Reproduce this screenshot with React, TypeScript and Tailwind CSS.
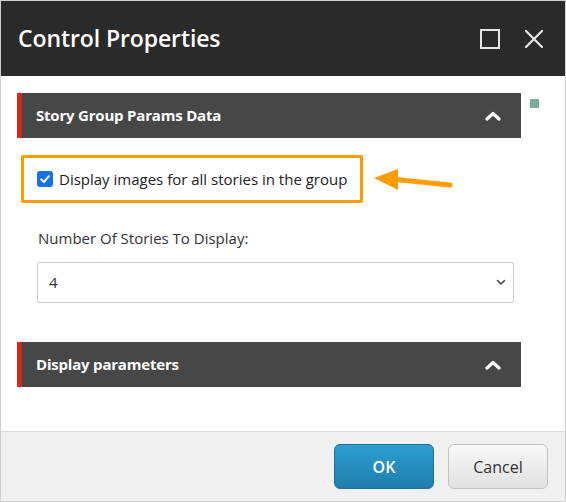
import React from 'react';

// ヘッダーの折りたたみ矢印
const ChevronUp = () => (
  <svg width="16" height="10" viewBox="0 0 16 10" fill="none">
    <path d="M2 8 L8 2.5 L14 8" stroke="#ffffff" strokeWidth="3.2" strokeLinecap="round" strokeLinejoin="round" />
  </svg>
);

const SectionHeader = ({ title }: { title: string }) => (
  <div className="h-[45px] bg-[#474747] border-l-[5px] border-[#d8261c] flex items-center justify-between pl-[14px] pr-[20px]">
    <span className="text-[15px] font-bold text-white tracking-[-0.2px]">{title}</span>
    <ChevronUp />
  </div>
);

export default function App() {
  return (
    <div
      className="relative w-[566px] h-[502px] bg-white border border-[#cfcfcf] flex flex-col overflow-hidden"
      style={{ fontFamily: '"Open Sans", "Noto Sans", sans-serif' }}
    >
      {/* タイトルバー */}
      <div className="h-[75px] bg-[#2a2a2a] flex items-center justify-between pl-[17px] pr-[21px] shrink-0">
        <h1 className="text-[23px] text-white font-semibold tracking-[-0.1px]">Control Properties</h1>
        <div className="flex items-center gap-[24px]">
          <svg width="20" height="20" viewBox="0 0 20 20" fill="none">
            <rect x="1" y="1" width="18" height="18" stroke="#e6e6e6" strokeWidth="2" />
          </svg>
          <svg width="20" height="20" viewBox="0 0 20 20" fill="none">
            <path d="M2 2 L18 18 M18 2 L2 18" stroke="#e6e6e6" strokeWidth="2.2" strokeLinecap="round" />
          </svg>
        </div>
      </div>

      {/* 本体 */}
      <div className="flex-1 flex pt-[17px] pl-[16px]">
        <div className="w-[504px] flex flex-col">
          <SectionHeader title="Story Group Params Data" />

          <div className="mt-[17px] ml-[4px] w-[342px] h-[48px] border-[3.5px] border-[#ff9c00] rounded-[2px] flex items-center pl-[13px]">
            <span className="w-[16px] h-[16px] rounded-[3px] bg-[#1672e6] flex items-center justify-center shrink-0">
              <svg width="12" height="12" viewBox="0 0 12 12" fill="none">
                <path d="M2.2 6.4 L4.9 9 L9.8 3.2" stroke="#ffffff" strokeWidth="2" strokeLinecap="round" strokeLinejoin="round" />
              </svg>
            </span>
            <span className="ml-[6px] text-[15px] text-[#222]">
              Display images for all stories in the group
            </span>
          </div>

          <label className="mt-[25px] ml-[21px] text-[15px] leading-[20px] text-[#333]">
            Number Of Stories To Display:
          </label>

          <div className="mt-[14px] ml-[20px] w-[477px] h-[41px] border border-[#cccccc] rounded-[2px] flex items-center justify-between pl-[11px] pr-[7px]">
            <span className="text-[15px] text-[#333]">4</span>
            <svg width="10" height="7" viewBox="0 0 10 7" fill="none">
              <path d="M1.5 1.5 L5 5 L8.5 1.5" stroke="#444" strokeWidth="1.6" strokeLinecap="round" strokeLinejoin="round" />
            </svg>
          </div>

          <div className="mt-[39px]">
            <SectionHeader title="Display parameters" />
          </div>
        </div>
        <div className="ml-[9px] mt-[6px] w-[9px] h-[9px] bg-[#79ad99] rounded-[1px]" />
      </div>

      {/* 注釈の矢印 */}
      <svg className="absolute left-[360px] top-[160px]" width="100" height="40" viewBox="360 160 100 40" fill="none">
        <polygon points="373,177 397,168 397,189" fill="#ff9c00" />
        <path d="M395 178.5 L449 184" stroke="#ff9c00" strokeWidth="5" strokeLinecap="round" />
      </svg>

      {/* フッター */}
      <div className="h-[70px] shrink-0 bg-[#f0f0f0] border-t border-[#dcdcdc] flex items-center justify-end gap-[14px] pr-[17px]">
        <button className="w-[100px] h-[45px] rounded-[6px] border border-[#1c6f98] bg-gradient-to-b from-[#2c9fd3] to-[#1f7dab] text-white text-[16px] font-semibold">
          OK
        </button>
        <button className="w-[100px] h-[45px] rounded-[6px] border border-[#c3c3c3] bg-gradient-to-b from-[#f7f7f7] to-[#e2e2e2] text-[#333] text-[16px]">
          Cancel
        </button>
      </div>
    </div>
  );
}
